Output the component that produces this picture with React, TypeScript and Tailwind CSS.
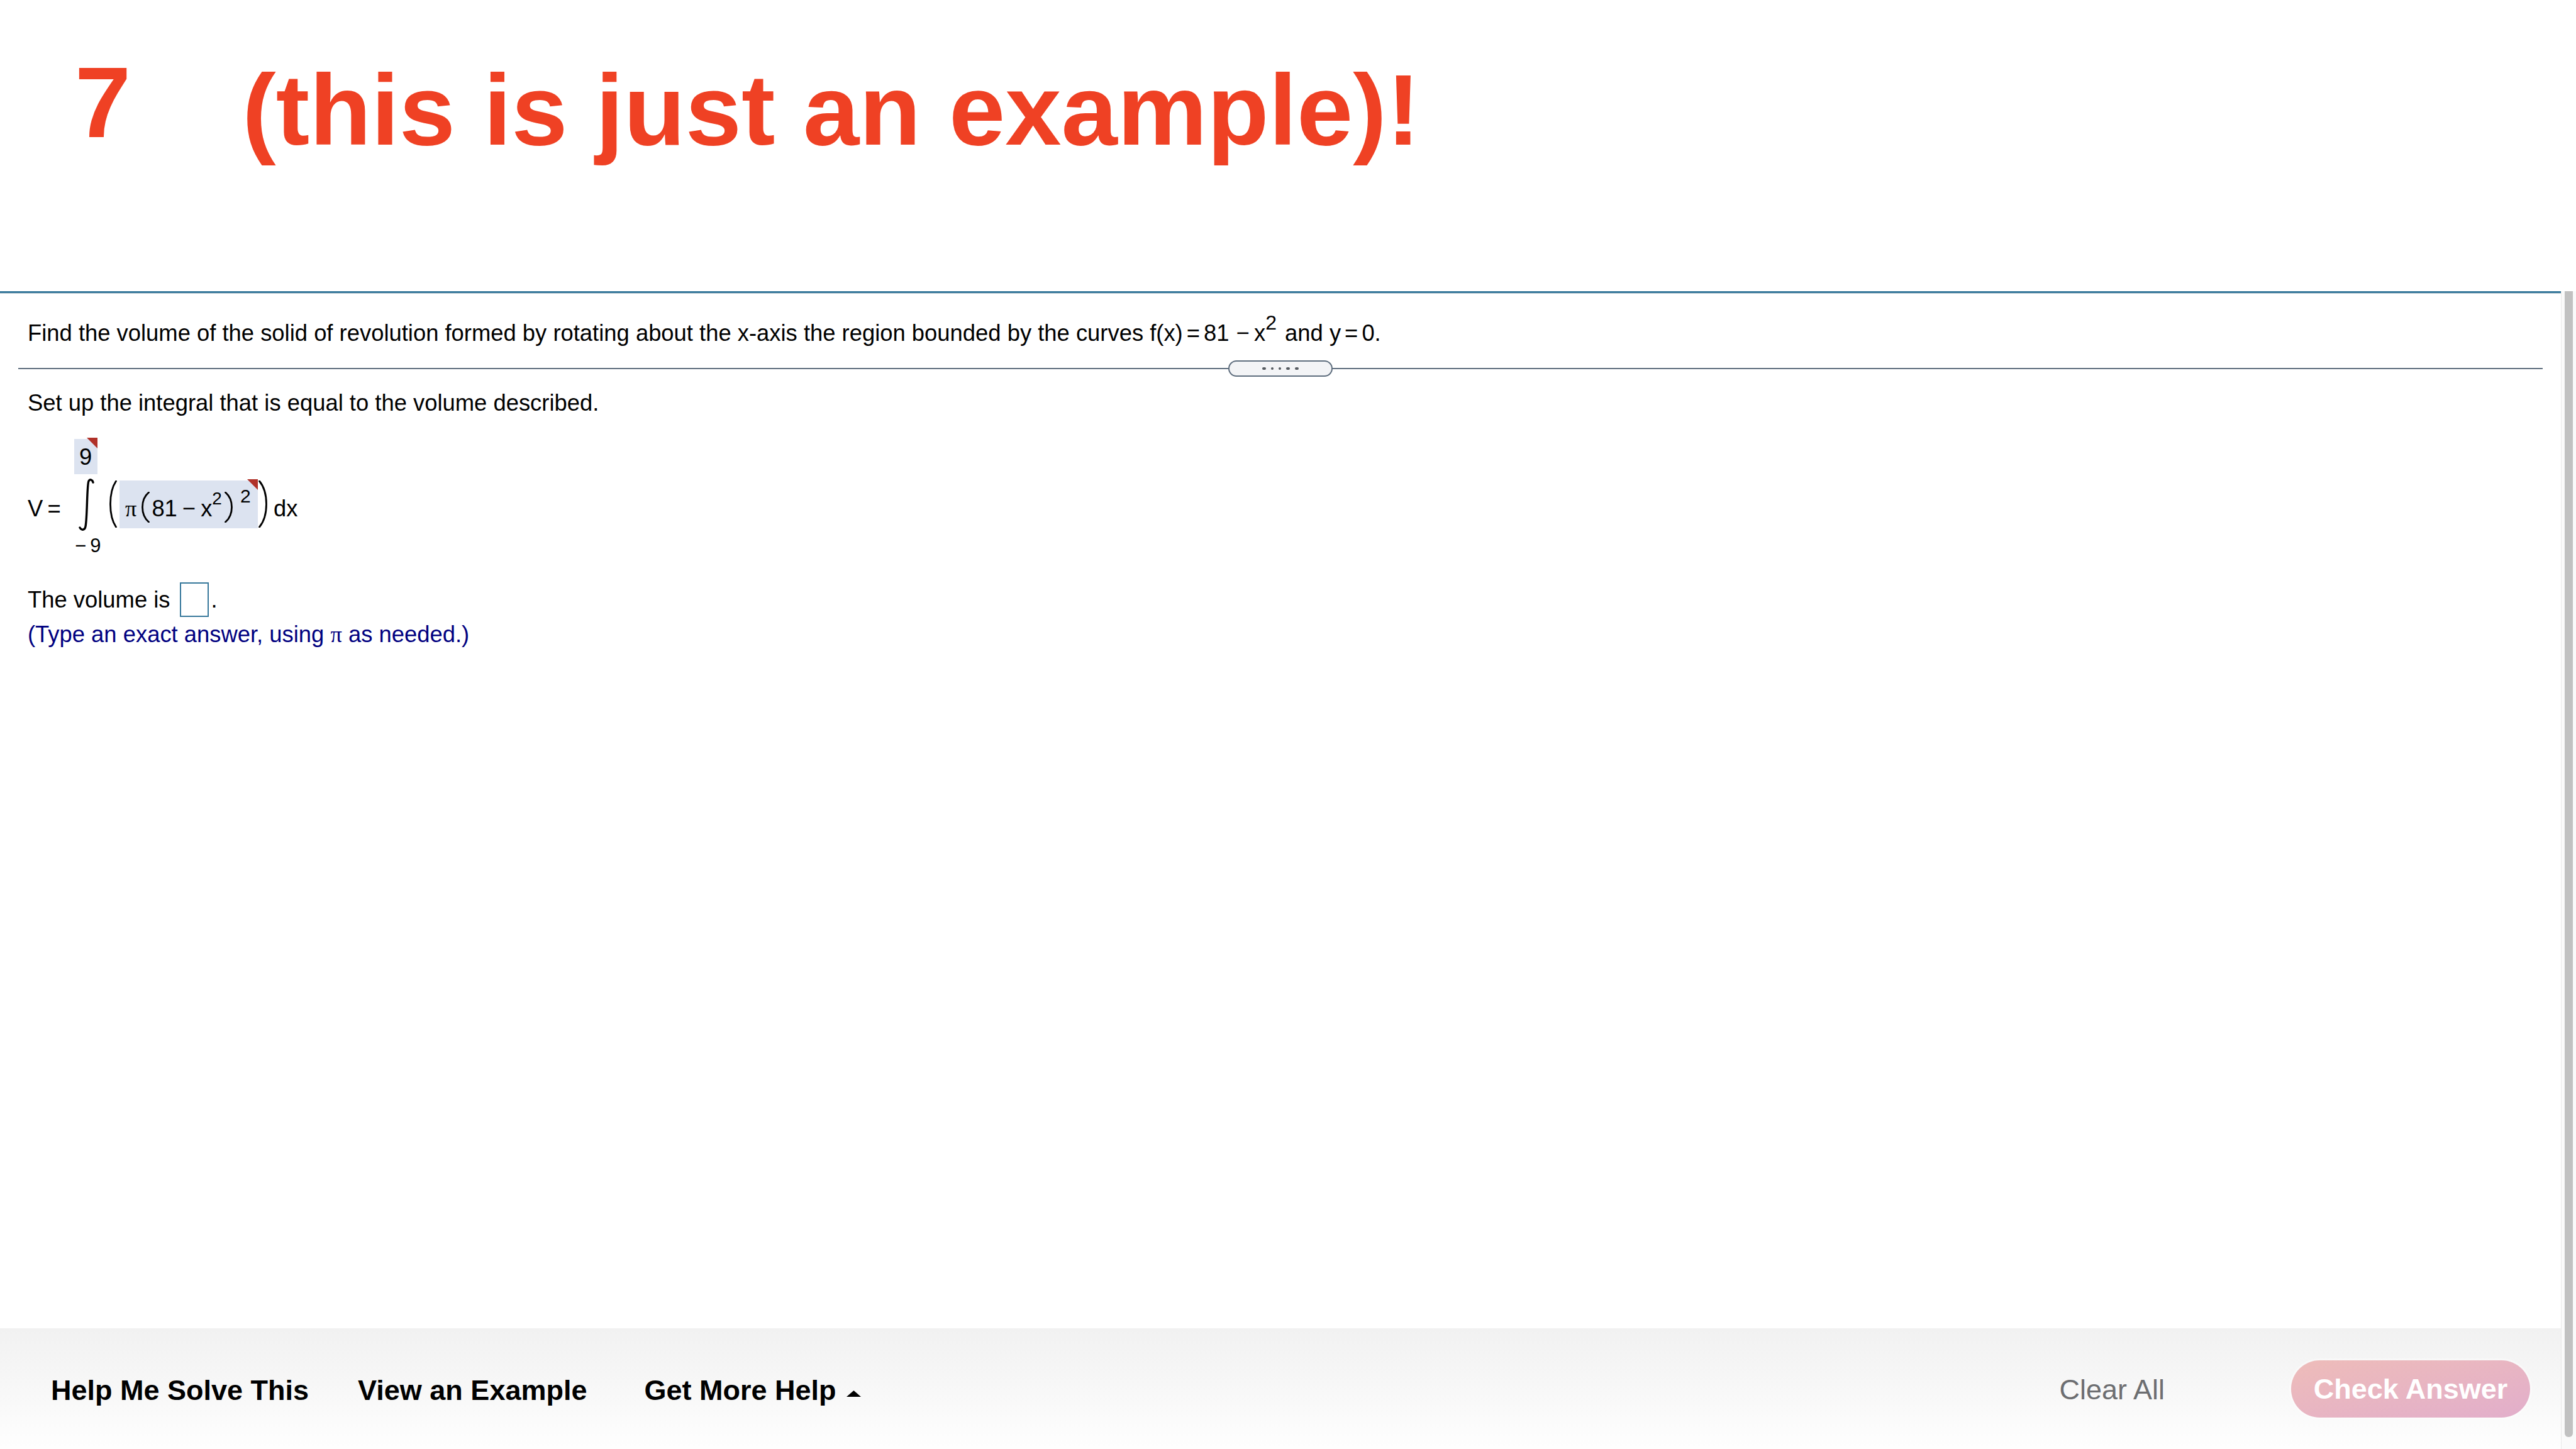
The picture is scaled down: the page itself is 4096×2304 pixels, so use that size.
function Triangle() {
  return (
    <svg className="absolute right-0 -top-[2px]" width="17" height="17" viewBox="0 0 17 17">
      <polygon points="0,0 17,0 17,17" fill="#b03129" />
    </svg>
  );
}

function Paren({ w, h, flip, className }: { w: number; h: number; flip?: boolean; className?: string }) {
  const bulge = (w - 3) / 0.75;
  const d = flip
    ? `M1.5 1 C${1.5 + bulge} ${h * 0.25} ${1.5 + bulge} ${h * 0.75} 1.5 ${h - 1}`
    : `M${w - 1.5} 1 C${w - 1.5 - bulge} ${h * 0.25} ${w - 1.5 - bulge} ${h * 0.75} ${w - 1.5} ${h - 1}`;
  return (
    <svg className={className} width={w} height={h} viewBox={`0 0 ${w} ${h}`} fill="none">
      <path d={d} stroke="#000" strokeWidth="2.8" strokeLinecap="round" />
    </svg>
  );
}

function HandleDots() {
  return (
    <div className="flex items-center gap-[8px]">
      <span className="w-[6px] h-[4px] rounded-[2px] bg-[#555a60]" />
      <span className="w-[4px] h-[4px] rounded-[2px] bg-[#555a60]" />
      <span className="w-[4px] h-[4px] rounded-[2px] bg-[#555a60]" />
      <span className="w-[6px] h-[4px] rounded-[2px] bg-[#555a60]" />
      <span className="w-[6px] h-[4px] rounded-[2px] bg-[#555a60]" />
    </div>
  );
}

export default function App() {
  return (
    <div className="w-[4096px] h-[2304px] flex flex-col bg-white overflow-hidden font-['Liberation_Sans',Arial,sans-serif] text-black">
      <header className="h-[463px] flex items-start font-bold text-[160.5px] leading-[160px] text-[#ef4124]">
        <span className="ml-[119px] mt-[83px]">7</span>
        <span className="ml-[177px] mt-[95px]">(this is just an example)!</span>
      </header>

      <div className="flex-1 flex min-h-0">
        <main className="w-[4072px] flex flex-col border-t-[3px] border-[#37789b]">
          <div className="h-[1px] bg-[#d0d8dc]" />

          <div className="flex-1 text-[36.4px] leading-[36px]">
            <p className="mt-[45px] ml-[44px] h-[36px] whitespace-nowrap">
              Find the volume of the solid of revolution formed by rotating about the x-axis the region bounded by the
              curves f(x)<span className="mx-[6px]">=</span>81 <span className="ml-[1px] -mr-[3px]">−</span> x
              <span className="text-[32px] leading-[0px] align-[18px]">2</span>
              <span className="ml-[3px]"> and y</span>
              <span className="mx-[6px]">=</span>0.
            </p>

            <div className="relative h-[2px] mt-[37px] mx-[29px] bg-[#5f6e7e]">
              <div className="absolute left-1/2 -top-[12px] -translate-x-1/2 w-[166px] h-[26px] rounded-[13px] border-2 border-[#5f6e7e] bg-[#f3f4f6] flex items-center justify-center">
                <HandleDots />
              </div>
            </div>

            <p className="mt-[36px] ml-[44px]">Set up the integral that is equal to the volume described.</p>

            <div className="mt-[38px] ml-[44px] h-[229px] flex items-start">
              <span className="mt-[94px] w-[52px] whitespace-nowrap">V{"\u2009"}=</span>
              <div className="ml-[22px] w-[41px] flex flex-col items-start">
                <div className="relative mt-[1px] w-[37px] h-[56px] bg-[#dce3f0] pl-[8px] pt-[11px]">
                  9
                  <Triangle />
                </div>
                <svg className="mt-[7px] ml-[5px]" width="27" height="83" viewBox="0 0 27 83" fill="none">
                  <path d="M25 6C24 2 20 0 18 4C15 10 16 60 13 76C12 82 7 83 4 78" stroke="#000" strokeWidth="3.4" strokeLinecap="round" />
                </svg>
                <span className="mt-[8px] ml-[1px] text-[31px] leading-[32px] whitespace-nowrap">−{"\u2009"}9</span>
              </div>

              <Paren className="ml-[15px] mt-[67px]" w={12} h={75} />
              <div className="relative ml-[4px] mt-[67px] w-[220px] h-[76px] bg-[#dce3f0] flex items-start pl-[9px]">
                <span className="mt-[27px] font-['Liberation_Serif',serif]">π</span>
                <Paren className="ml-[8px] mt-[18px]" w={13} h={49} />
                <span className="ml-[3px] mt-[27px]">81</span>
                <span className="ml-[8px] mt-[27px]">−</span>
                <span className="ml-[8px] mt-[27px]">x</span>
                <span className="mt-[15px] text-[28px] leading-[28px]">2</span>
                <Paren className="ml-[4px] mt-[18px]" flip w={13} h={49} />
                <span className="ml-[12px] mt-[10px] text-[30px] leading-[30px]">2</span>
                <Triangle />
              </div>
              <Paren className="ml-[1px] mt-[67px]" flip w={14} h={75} />
              <span className="ml-[10px] mt-[94px]">dx</span>
            </div>

            <div className="ml-[44px] h-[55px] flex items-center">
              <span>The volume is</span>
              <div className="ml-[15px] w-[46px] h-[55px] border-2 border-[#37789b] bg-white" />
              <span className="ml-[4px]">.</span>
            </div>
            <p className="mt-[10px] ml-[44px] text-[#000080]">
              (Type an exact answer, using <span className="font-['Liberation_Serif',serif]">π</span> as needed.)
            </p>
          </div>

          <footer className="h-[192px] flex items-center pr-[49px] bg-linear-to-b from-[#f1f1f1] to-[#fefefe] text-[45px] leading-[50px]">
            <div className="flex items-center pt-[6px] font-bold">
              <span className="ml-[81px]">Help Me Solve This</span>
              <span className="ml-[78px]">View an Example</span>
              <span className="ml-[91px]">Get More Help</span>
              <svg className="ml-[16px] mt-[10px]" width="23" height="10" viewBox="0 0 23 10">
                <polygon points="11.5,0 23,10 0,10" fill="#000" />
              </svg>
            </div>
            <span className="ml-auto pt-[3px] text-[#6d6e71]">Clear All</span>
            <button className="ml-[201px] w-[380px] h-[91px] pt-[2px] rounded-full bg-linear-to-br from-[#eebcb9] to-[#e2aecb] ring-[3px] ring-white/40 text-white font-bold">
              Check Answer
            </button>
          </footer>
        </main>

        <aside className="w-[24px] flex justify-start bg-[#fafafa] border-l border-[#e8e8e8] pl-[5px]">
          <div className="w-[13px] h-[1822px] rounded-b-[6px] bg-[#c1c1c1]" />
        </aside>
      </div>
    </div>
  );
}
